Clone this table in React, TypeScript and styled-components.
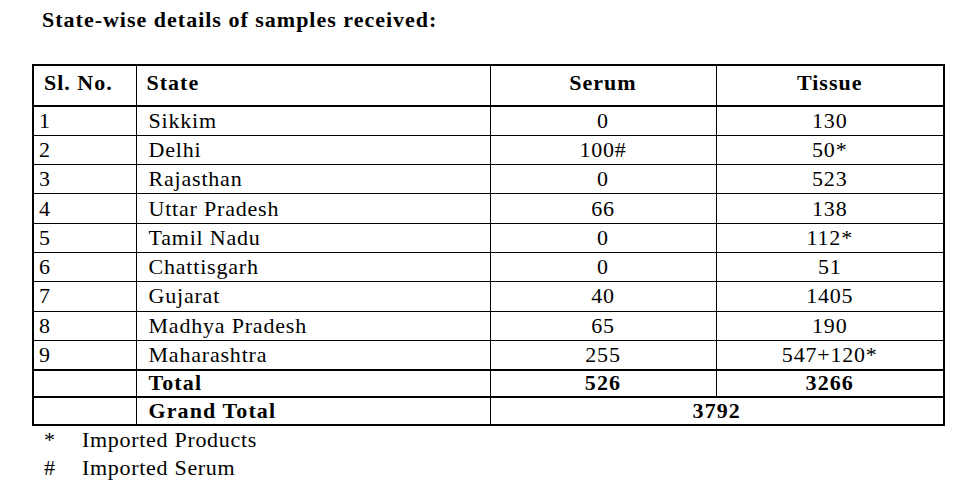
import React from 'react';
import styled, { createGlobalStyle } from 'styled-components';

const GlobalStyle = createGlobalStyle`
  html, body {
    margin: 0;
    padding: 0;
    background: #fff;
  }
  body {
    font-family: "Liberation Serif", "Times New Roman", serif;
    color: #000;
  }
`;

const Page = styled.div`
  width: 965px;
  height: 500px;
  padding: 0 0 0 32px;
  box-sizing: border-box;
  overflow: hidden;
`;

const Title = styled.h1`
  margin: 0;
  padding: 7px 0 0 10px;
  height: 64px;
  box-sizing: border-box;
  font-size: 22px;
  font-weight: bold;
  letter-spacing: 1px;
  line-height: 26px;
`;

const Table = styled.table`
  border-collapse: collapse;
  width: 911px;
  table-layout: fixed;
  border: 2px solid #000;
  font-size: 22px;
`;

const HeadCell = styled.th<{ $align?: 'left' | 'center' }>`
  height: 41px;
  padding: 0 0 5px ${(p) => (p.$align === 'left' ? '10px' : '0')};
  box-sizing: border-box;
  text-align: ${(p) => p.$align ?? 'center'};
  font-weight: bold;
  letter-spacing: 1px;
  line-height: 24px;
  border-left: 1px solid #000;
  border-bottom: 2px solid #000;
  vertical-align: middle;
`;

const Row = styled.tr<{ $heavy?: boolean }>`
  height: ${(p) => (p.$heavy ? '27.5px' : '29.3px')};
  border-top: ${(p) => (p.$heavy ? '2px' : '1px')} solid #000;
`;

const Cell = styled.td<{ $align?: 'left' | 'center'; $bold?: boolean; $pad?: number }>`
  padding: 0 0 0 ${(p) => p.$pad ?? 0}px;
  text-align: ${(p) => p.$align ?? 'center'};
  font-weight: ${(p) => (p.$bold ? 'bold' : 'normal')};
  letter-spacing: ${(p) => (p.$bold ? '1.1px' : '0.8px')};
  border-left: 1px solid #000;
  line-height: 24px;
  vertical-align: middle;
  white-space: nowrap;
`;

const Notes = styled.div`
  padding: 0 0 0 12px;
  font-size: 22px;
  letter-spacing: 0.7px;
`;

const Note = styled.div`
  display: grid;
  grid-template-columns: 38px auto;
  height: 28px;
  line-height: 28px;
`;

const rows = [
  { no: '1', state: 'Sikkim', serum: '0', tissue: '130' },
  { no: '2', state: 'Delhi', serum: '100#', tissue: '50*' },
  { no: '3', state: 'Rajasthan', serum: '0', tissue: '523' },
  { no: '4', state: 'Uttar Pradesh', serum: '66', tissue: '138' },
  { no: '5', state: 'Tamil Nadu', serum: '0', tissue: '112*' },
  { no: '6', state: 'Chattisgarh', serum: '0', tissue: '51' },
  { no: '7', state: 'Gujarat', serum: '40', tissue: '1405' },
  { no: '8', state: 'Madhya Pradesh', serum: '65', tissue: '190' },
  { no: '9', state: 'Maharashtra', serum: '255', tissue: '547+120*' },
];

export default function App() {
  return (
    <Page>
      <GlobalStyle />
      <Title>State-wise details of samples received:</Title>
      <Table>
        <colgroup>
          <col style={{ width: 103 }} />
          <col style={{ width: 354 }} />
          <col style={{ width: 226 }} />
          <col style={{ width: 228 }} />
        </colgroup>
        <thead>
          <tr>
            <HeadCell $align="left">Sl. No.</HeadCell>
            <HeadCell $align="left">State</HeadCell>
            <HeadCell>Serum</HeadCell>
            <HeadCell>Tissue</HeadCell>
          </tr>
        </thead>
        <tbody>
          {rows.map((r) => (
            <Row key={r.no}>
              <Cell $align="left" $pad={5}>{r.no}</Cell>
              <Cell $align="left" $pad={12}>{r.state}</Cell>
              <Cell>{r.serum}</Cell>
              <Cell>{r.tissue}</Cell>
            </Row>
          ))}
          <Row $heavy>
            <Cell />
            <Cell $align="left" $pad={12} $bold>Total</Cell>
            <Cell $bold>526</Cell>
            <Cell $bold>3266</Cell>
          </Row>
          <Row $heavy>
            <Cell />
            <Cell $align="left" $pad={12} $bold>Grand Total</Cell>
            <Cell colSpan={2} $bold>3792</Cell>
          </Row>
        </tbody>
      </Table>
      <Notes>
        <Note>
          <span>*</span>
          <span>Imported Products</span>
        </Note>
        <Note>
          <span>#</span>
          <span>Imported Serum</span>
        </Note>
      </Notes>
    </Page>
  );
}
